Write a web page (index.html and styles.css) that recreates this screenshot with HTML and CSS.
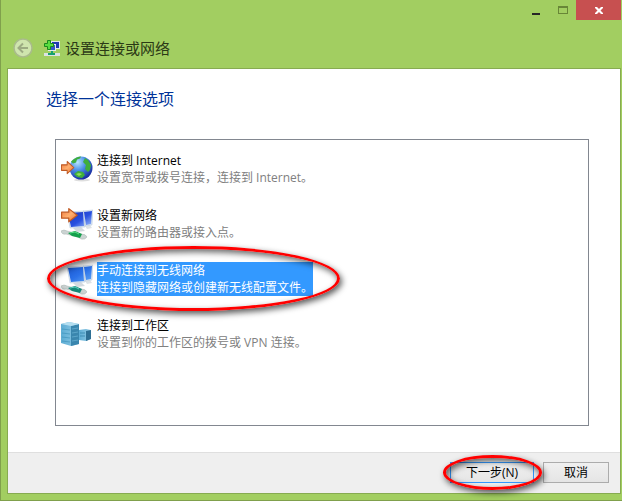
FILE: index.html
```html
<!DOCTYPE html>
<html lang="zh-CN">
<head>
<meta charset="utf-8">
<title>设置连接或网络</title>
<link rel="stylesheet" href="styles.css">
</head>
<body>
<svg class="defs" aria-hidden="true">
  <defs>
    <linearGradient id="orange" x1="0" y1="0" x2="1" y2="1"><stop offset="0" stop-color="#f07a3c"/><stop offset=".5" stop-color="#ffb070"/><stop offset="1" stop-color="#ee6c26"/></linearGradient>
    <radialGradient id="globe" cx=".35" cy=".25" r=".8"><stop offset="0" stop-color="#b8e6ff"/><stop offset=".45" stop-color="#4a8ee6"/><stop offset="1" stop-color="#14249c"/></radialGradient>
    <linearGradient id="screen" x1="0" y1="0" x2="1" y2="1"><stop offset="0" stop-color="#1a34b8"/><stop offset=".55" stop-color="#2850e0"/><stop offset="1" stop-color="#a8c8fc"/></linearGradient>
    <linearGradient id="screen-lit" x1="0" y1="0" x2="1" y2="1"><stop offset="0" stop-color="#1c58d0"/><stop offset=".5" stop-color="#2a70e8"/><stop offset="1" stop-color="#60a8f8"/></linearGradient>
    <linearGradient id="server" x1="0" y1="0" x2="1" y2="0"><stop offset="0" stop-color="#5cacd4"/><stop offset="1" stop-color="#94cce6"/></linearGradient>
    <path id="arrow" d="M.5 3.500h6V.5l7 5.500-7 5.500v-3h-6z" fill="url(#orange)" stroke="#c05a24" stroke-linejoin="round"/>
    <g id="cable">
      <path d="M12 20l8-1 4 4-8 1z" fill="#d4dae0"/>
      <path d="M24 18l5-1 2 3-5 1z" fill="#dde2e6"/>
      <path d="M0 23q3-2 6 0l4 1 10 2q5 0 6 3-2 3-6 2l-3-2-12-3q-4 1-5-3z" fill="#cbd3d2" stroke="#a8b4b2" stroke-width=".5"/>
    </g>
    <path id="frames" d="M22 3l10-1-1 15-7 1zM6 4l17-1 1 16-15 1z" fill="#dbe6f2" stroke="#b5c6da" stroke-width=".5"/>
    <path id="screens" d="M23 4l8-1-1 13-5 1zM7 5l15-1 1 14-13 1z"/>
  </defs>
</svg>
<div class="window">
  <div class="controls">
    <button class="control" aria-label="最小化"><svg width="10" height="10"><path d="M1 8h8v2H1z" fill="#262626"/></svg></button>
    <button class="control" aria-label="最大化" disabled><svg width="10" height="8"><path d="M0 0h10v8H0zM1 2v5h8V2z" fill="#688637" fill-rule="evenodd"/></svg></button>
    <button class="control close" aria-label="关闭"><svg width="8" height="7"><path d="M0 0h2l2 2 2-2h2v1L5.500 3.500 8 6v1H6L4 5 2 7H0V6l2.500-2.500L0 1z" fill="#fff"/></svg></button>
  </div>
  <header class="caption">
    <button class="back" aria-label="返回" disabled><svg width="20" height="20"><circle cx="10" cy="10" r="9" fill="#cfe5ae" stroke="#a9bb8b" stroke-width="1.500"/><path d="M15 10H6M10 5.500L5.500 10l4.500 4.500" fill="none" stroke="#9cab82" stroke-width="2"/></svg></button>
    <svg class="app-icon" width="16" height="16" viewBox="0 0 16 16"><path d="M7 1h9v8H7z" fill="#dfe6ee"/><path d="M8 2h7v6H8z" fill="#2038b0"/><path d="M4 4h8v7H4z" fill="#e4eaf0"/><path d="M5 5h6v5H5z" fill="#3458c8"/><path d="M7 11h2v2H7z" fill="#18a070"/><path d="M0 13h16v3H0z" fill="#dce2e2"/><path d="M4 13h7v2H4z" fill="#18a070"/><path d="M3.500.5h3v3h3v3h-3v3h-3v-3h-3v-3h3z" fill="#58dc40" stroke="#188a1c"/></svg>
    <span>设置连接或网络</span>
  </header>
  <main class="page">
    <h1>选择一个连接选项</h1>
    <div class="options">
      <button class="option">
        <svg width="32" height="32" viewBox="0 0 32 32"><ellipse cx="21" cy="27" rx="8" ry="1.500" fill="#dedede"/><circle cx="20" cy="15" r="11.500" fill="url(#globe)"/><path d="M13 6q4-3 7-2.500l-1 2-3 1-1 3-3 1-2-2zM24 5l3 2 3 5-1 5-2 2-3-3 1-4-3-3zM13 21l4-3 5 1 2 3-3 3-5-1z" fill="#3fae3c"/><path d="M15 21l3-1 3 1-3 2z" fill="#8fdc58"/><use href="#arrow" transform="translate(0 8) scale(.95 1.100)"/></svg>
        <span class="text"><span class="name">连接到 Internet</span><span class="note">设置宽带或拨号连接，连接到 Internet。</span></span>
      </button>
      <button class="option">
        <svg width="32" height="32" viewBox="0 0 32 32"><use href="#cable"/><use href="#frames"/><use href="#screens" fill="url(#screen)"/><path d="M7 25l7-2 7 3-2 4-8-2z" fill="#14a04c"/><path d="M9 25l5-1 4 2" fill="none" stroke="#60e08c"/><use href="#arrow" transform="scale(1.200)"/></svg>
        <span class="text"><span class="name">设置新网络</span><span class="note">设置新的路由器或接入点。</span></span>
      </button>
      <button class="option selected" aria-pressed="true">
        <svg width="32" height="32" viewBox="0 0 32 32"><use href="#cable"/><use href="#frames"/><use href="#screens" fill="url(#screen-lit)"/><path d="M7 25l7-2 7 3-2 4-8-2z" fill="#148878"/><path d="M9 25l5-1 4 2" fill="none" stroke="#5cd0c0"/></svg>
        <span class="text"><span class="name">手动连接到无线网络</span><span class="note">连接到隐藏网络或创建新无线配置文件。</span></span>
        <span class="ring ring-option"></span>
      </button>
      <button class="option">
        <svg width="32" height="32" viewBox="0 0 32 32"><path d="M18 12l7-1 5 1v9l-5 2-7-1z" fill="url(#server)"/><path d="M25 13l5-1v9l-5 2z" fill="#2e6f94"/><path d="M19 15h5M19 18h5" stroke="#3f8db4"/><path d="M0 6l8-2 10 2v20l-8 2-10-3z" fill="url(#server)"/><path d="M10 8l8-2v20l-8 2z" fill="#3a86ae"/><path d="M1 11l8 1M1 15l8 1M1 19l8 1M1 23l8 1" stroke="#3f93bc" fill="none" stroke-width=".7"/><path d="M0 6l8-2 10 2-8 2z" fill="#b4deF0"/><path d="M11 11l6-1M11 15l6-1M11 19l6-1M11 23l6-1" stroke="#6cb4d6" stroke-width=".7"/></svg>
        <span class="text"><span class="name">连接到工作区</span><span class="note">设置到你的工作区的拨号或 VPN 连接。</span></span>
      </button>
    </div>
  </main>
  <footer class="actions">
    <span class="marked"><button class="action primary">下一步(N)</button><span class="ring ring-action"></span></span>
    <button class="action">取消</button>
  </footer>
</div>
</body>
</html>
```
FILE: styles.css
```css
* { box-sizing: border-box; }

body {
  margin: 0;
  font: 12px/17px "Open Sans", "Noto Sans CJK SC", sans-serif;
  color: #000;
}

button {
  margin: 0;
  padding: 0;
  border: 0;
  background: none;
  font: inherit;
  color: inherit;
}

svg { display: block; flex: none; }

.defs { position: absolute; width: 0; height: 0; }

.window {
  display: flex;
  flex-direction: column;
  min-height: 100vh;
  padding: 0 1px 6px 6px;
  border: solid #80a04c;
  border-width: 0 0 1px 1px;
  background: #a2ce61;
}

.controls { display: flex; justify-content: flex-end; height: 20px; }

.control {
  display: flex;
  align-items: center;
  justify-content: center;
  width: 27px;
}

.close { width: 45px; background: #c75050; }

.caption {
  display: flex;
  align-items: center;
  height: 48px;
  padding: 7px 6px 0;
  font-size: 15px;
  line-height: 20px;
  color: #2b3a16;
}

.app-icon { margin: 0 5px 0 11px; }

.page {
  flex: 1;
  display: flex;
  flex-direction: column;
  padding: 18px 31px 26px 38px;
  border: solid #87ab51;
  border-width: 1px 1px 0;
  background: #fff;
}

h1 {
  margin: 0 0 28px;
  font-size: 16px;
  font-weight: 400;
  line-height: 24px;
  color: #003399;
}

.options {
  flex: 1;
  display: flex;
  flex-direction: column;
  gap: 21px;
  margin-left: 9px;
  padding: 12px 5px;
  border: 1px solid #828790;
}

.option {
  position: relative;
  display: flex;
  align-items: center;
  gap: 4px;
  height: 34px;
  text-align: left;
}

.name, .note { display: block; }

.note { color: #808080; }

.selected .text { background: #3399ff; }

.selected .name, .selected .note { color: #fff; }

.actions {
  display: flex;
  justify-content: flex-end;
  gap: 9px;
  padding: 10px 11px;
  border: solid #87ab51;
  border-width: 0 1px 1px;
  background: #efefef;
  box-shadow: inset 0 1px #dfdfdf;
}

.marked { position: relative; }

.action {
  display: block;
  width: 66px;
  height: 21px;
  border: 1px solid #acacac;
  background: linear-gradient(#f0f0f0, #e5e5e5);
}

.primary { width: 84px; border-color: #3399ff; }

.ring {
  position: absolute;
  border: 3px solid #ff0000;
  border-radius: 50%;
  box-shadow: 2px 3px 6px rgba(0, 0, 0, .65), inset 2px 3px 6px rgba(0, 0, 0, .6);
  pointer-events: none;
}

.ring-option { top: -16px; left: -14px; width: 293px; height: 65px; }

.ring-action { top: -7px; left: -7px; width: 99px; height: 35px; }
```
